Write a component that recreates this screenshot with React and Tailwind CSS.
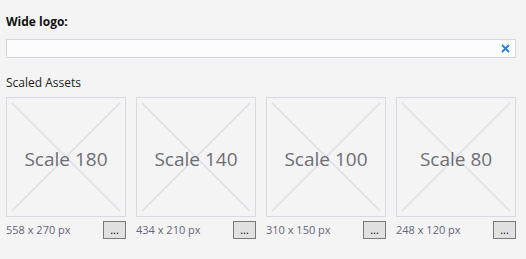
import React from 'react';

const ASSETS = [
  { scale: 180, size: '558 x 270 px' },
  { scale: 140, size: '434 x 210 px' },
  { scale: 100, size: '310 x 150 px' },
  { scale: 80, size: '248 x 120 px' },
];

function Tile({ scale, size }) {
  return (
    <div className="w-[120px] flex flex-col">
      <div className="relative w-[120px] h-[120px] border border-[#d9d9e3] flex items-center justify-center">
        <svg className="absolute inset-0" width="118" height="118" viewBox="0 0 118 118">
          <line x1="5" y1="5" x2="113" y2="113" stroke="#dcdce6" strokeWidth="1.2" />
          <line x1="113" y1="5" x2="5" y2="113" stroke="#dcdce6" strokeWidth="1.2" />
        </svg>
        <span className="relative mt-[4px] text-[19px] text-[#6e6e74]">Scale {scale}</span>
      </div>
      <div className="flex items-start justify-between mt-[4px]">
        <span className="text-[11px] text-[#66667a] mt-[1px]">{size}</span>
        <button className="w-[23px] h-[18px] bg-[#e1e1e1] border border-[#7a7a7a] text-[11px] leading-[12px] text-black flex items-center justify-center">
          ...
        </button>
      </div>
    </div>
  );
}

export default function App() {
  return (
    <div className="w-[526px] h-[259px] bg-[#f4f4f4] px-[6px] pt-[13px] font-['Open_Sans',sans-serif]">
      <div className="text-[12px] font-bold text-[#111]">Wide logo:</div>
      <div className="mt-[8px] w-[510px] h-[19px] bg-[#fcfcfc] border border-[#d6d6e0] flex items-center justify-end pr-[5px]">
        <svg width="9" height="9" viewBox="0 0 9 9">
          <path d="M1 1L8 8M8 1L1 8" stroke="#2a7fd4" strokeWidth="1.8" />
        </svg>
      </div>
      <div className="mt-[16px] text-[12px] text-[#222]">Scaled Assets</div>
      <div className="mt-[5px] flex gap-[10px]">
        {ASSETS.map((a) => (
          <Tile key={a.scale} {...a} />
        ))}
      </div>
    </div>
  );
}
